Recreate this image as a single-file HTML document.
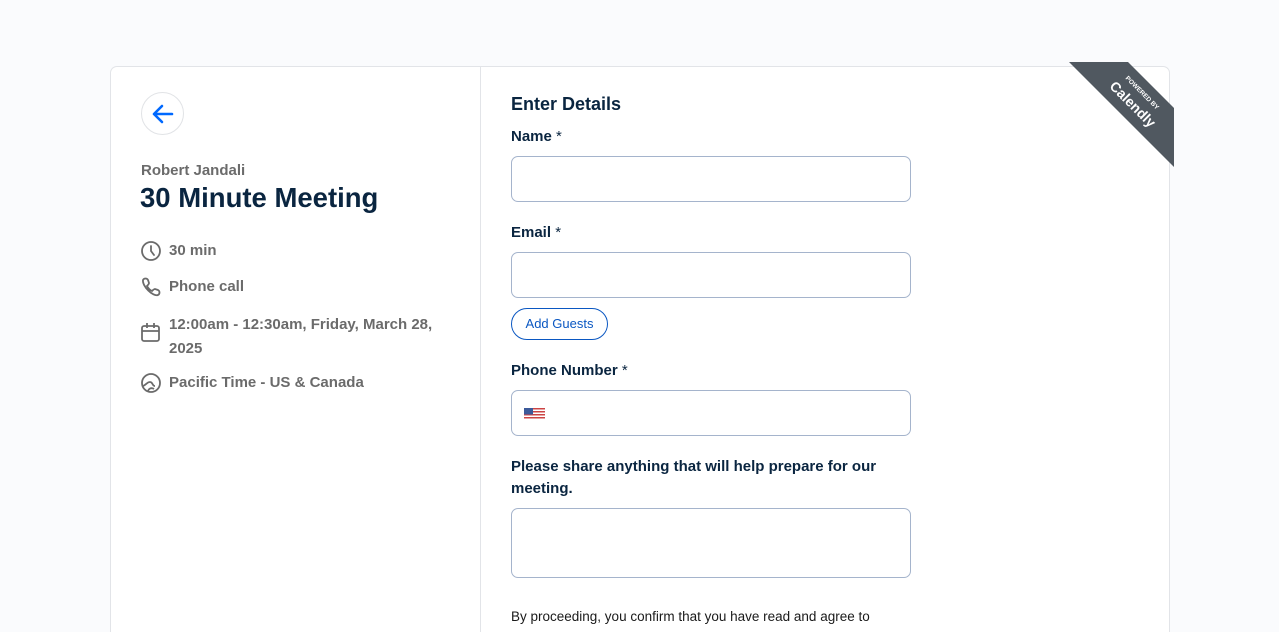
<!DOCTYPE html>
<html style="overflow:hidden;height:632px"><head><style>
body{margin:0;width:1279px;height:632px;background:#fafbfd;font-family:"Liberation Sans",sans-serif;overflow:hidden;position:relative}
.card{position:absolute;left:110px;top:66px;width:1060px;height:566px;background:#fff;border:1px solid #e2e4e8;border-bottom:none;border-radius:7px 7px 0 0;box-sizing:border-box}
.div{position:absolute;left:480px;top:67px;width:1px;height:565px;background:#e2e4e8}
.back{position:absolute;left:141px;top:92px;width:41px;height:41px;border:1px solid #e1e3e6;border-radius:50%}
.t{position:absolute;white-space:nowrap}
.g{color:#6b6b6b;font-weight:bold;font-size:15px}
.lab{color:#0a2540;font-weight:bold;font-size:15px}
.inp{position:absolute;left:511px;width:398px;height:44px;border:1px solid #a5b4cc;border-radius:7px}
.ic{position:absolute}
</style></head><body>
<div class="card"></div><div class="div"></div>
<div class="back"><svg width="41" height="41" viewBox="0 0 41 41"><path d="M30 21H12M20 13l-8 8 8 8" stroke="#0069ff" stroke-width="2.6" fill="none" stroke-linecap="round" stroke-linejoin="round"/></svg></div>
<div class="t g" style="left:141px;top:162px">Robert Jandali</div>
<div class="t" style="left:140px;top:182px;font-size:27.5px;font-weight:bold;color:#0a2540">30 Minute Meeting</div>
<svg class="ic" style="left:140px;top:240px" width="22" height="22" viewBox="0 0 22 22" fill="none" stroke="#6b6b6b" stroke-width="1.8"><circle cx="11" cy="11" r="9"/><path d="M11 6v5l3 4" stroke-linecap="round"/></svg>
<div class="t g" style="left:169px;top:242px">30 min</div>
<svg class="ic" style="left:140px;top:276px" width="22" height="22" viewBox="0 0 22 22" fill="none" stroke="#6b6b6b" stroke-width="1.8"><path d="M3 4c1-2 4-2 5 0l1 3c0 1-1 2-2 3 1 2 3 4 5 5 1-1 2-2 3-2l3 1c2 1 2 4 0 5-5 2-16-9-15-15z"/></svg>
<div class="t g" style="left:169px;top:278px">Phone call</div>
<svg class="ic" style="left:140px;top:322px" width="22" height="22" viewBox="0 0 22 22" fill="none" stroke="#6b6b6b" stroke-width="1.8"><rect x="2" y="4" width="17" height="15" rx="2"/><path d="M2 9h17M7 1v5M14 1v5"/></svg>
<div class="t g" style="left:169px;top:313px;line-height:24px">12:00am - 12:30am, Friday, March 28,<br>2025</div>
<svg class="ic" style="left:140px;top:372px" width="22" height="22" viewBox="0 0 22 22" fill="none" stroke="#6b6b6b" stroke-width="1.8"><circle cx="11" cy="11" r="9"/><path d="M3 14c3-1 4-4 7-4 3 0 2 4 5 4M8 20c0-3 3-5 6-3"/></svg>
<div class="t g" style="left:169px;top:374px">Pacific Time - US &amp; Canada</div>

<div class="t" style="left:511px;top:94px;font-size:18px;font-weight:bold;color:#0a2540">Enter Details</div>
<div class="t lab" style="left:511px;top:128px">Name <span style="font-weight:normal">*</span></div>
<div class="inp" style="top:156px"></div>
<div class="t lab" style="left:511px;top:224px">Email <span style="font-weight:normal">*</span></div>
<div class="inp" style="top:252px"></div>
<div class="t" style="left:511px;top:308px;width:95px;height:30px;border:1px solid #0a57c2;border-radius:16px;color:#0a57c2;font-size:13px;text-align:center;line-height:30px">Add Guests</div>
<div class="t lab" style="left:511px;top:362px">Phone Number <span style="font-weight:normal">*</span></div>
<div class="inp" style="top:390px"><svg style="position:absolute;left:12px;top:17px" width="21" height="12" viewBox="0 0 21 12"><rect width="21" height="12" fill="#fff"/><g fill="#c44"><rect y="0" width="21" height="1.5"/><rect y="3" width="21" height="1.5"/><rect y="6" width="21" height="1.5"/><rect y="9" width="21" height="1.5"/></g><rect width="9" height="6.5" fill="#3c5a9a"/></svg></div>
<div class="t lab" style="left:511px;top:456px;line-height:22px">Please share anything that will help prepare for our<br>meeting.</div>
<div class="inp" style="top:508px;height:68px"></div>
<div class="t" style="left:511px;top:609px;font-size:13.5px;color:#1a1a1a">By proceeding, you confirm that you have read and agree to</div>

<svg class="ic" style="left:1065px;top:58px" width="115" height="115" viewBox="0 0 115 115">
<polygon points="4,4 63,4 109,50 109,109" fill="#505860"/>
<text transform="translate(77,35) rotate(45)" text-anchor="middle" dominant-baseline="middle" font-family="Liberation Sans" font-size="6.5" font-weight="bold" fill="#fff">POWERED BY</text>
<text transform="translate(67,47) rotate(45)" text-anchor="middle" dominant-baseline="middle" font-family="Liberation Sans" font-size="14" font-weight="bold" fill="#fff">Calendly</text>
</svg>
</body></html>
